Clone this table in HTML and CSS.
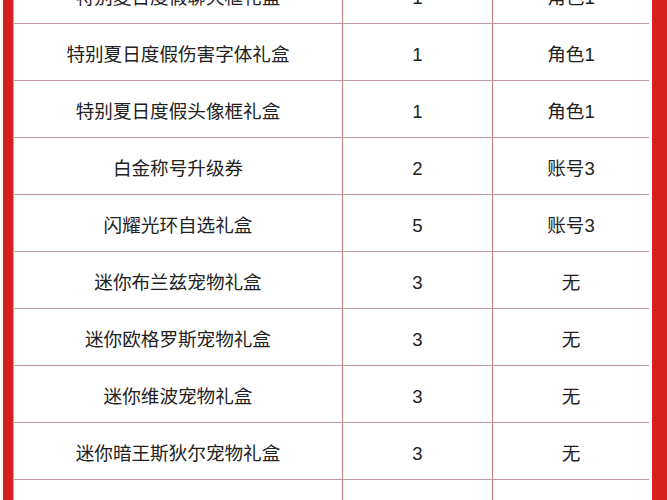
FILE: index.html
```html
<!DOCTYPE html>
<html lang="zh">
<head>
<meta charset="utf-8">
<link rel="stylesheet" href="styles.css">
</head>
<body>
<div class="page">
  <div class="bar bar-left"></div>
  <div class="table">
    <div class="row"><div class="cell">特别夏日度假聊天框礼盒</div><div class="cell num">1</div><div class="cell">角色1</div></div>
    <div class="row"><div class="cell">特别夏日度假伤害字体礼盒</div><div class="cell num">1</div><div class="cell">角色1</div></div>
    <div class="row"><div class="cell">特别夏日度假头像框礼盒</div><div class="cell num">1</div><div class="cell">角色1</div></div>
    <div class="row"><div class="cell">白金称号升级券</div><div class="cell num">2</div><div class="cell">账号3</div></div>
    <div class="row"><div class="cell">闪耀光环自选礼盒</div><div class="cell num">5</div><div class="cell">账号3</div></div>
    <div class="row"><div class="cell">迷你布兰兹宠物礼盒</div><div class="cell num">3</div><div class="cell">无</div></div>
    <div class="row"><div class="cell">迷你欧格罗斯宠物礼盒</div><div class="cell num">3</div><div class="cell">无</div></div>
    <div class="row"><div class="cell">迷你维波宠物礼盒</div><div class="cell num">3</div><div class="cell">无</div></div>
    <div class="row"><div class="cell">迷你暗王斯狄尔宠物礼盒</div><div class="cell num">3</div><div class="cell">无</div></div>
    <div class="row"><div class="cell">随机高级装扮礼盒</div><div class="cell num">10</div><div class="cell">账号1</div></div>
  </div>
  <div class="gap"></div>
  <div class="bar bar-right"></div>
</div>
</body>
</html>
```
FILE: styles.css
```css
html, body {
  margin: 0;
  padding: 0;
  background: #fff;
}
.page {
  width: 667px;
  height: 500px;
  overflow: hidden;
  display: flex;
  padding-left: 3px;
  box-sizing: border-box;
  background: #fdf7f7;
}
.bar {
  background: #d5201f;
  flex: none;
}
.bar-left {
  width: 10px;
  border-right: 1px solid #e89a9a;
}
.bar-right {
  width: 15px;
}
.gap {
  width: 3px;
  background: #fff;
  flex: none;
}
.table {
  width: 635px;
  flex: none;
  background: #fff;
  margin-top: -33px;
  display: flex;
  flex-direction: column;
}
.row {
  display: grid;
  grid-template-columns: 328px 150px 157px;
  height: 57px;
  box-sizing: border-box;
  border-bottom: 1px solid #c09a9a;
  flex: none;
}
.cell {
  display: flex;
  align-items: center;
  justify-content: center;
  font-family: "Liberation Sans", "Noto Sans CJK SC", sans-serif;
  font-size: 18.6px;
  color: #222;
  padding-top: 1px;
}
.cell.num {
  padding-top: 5px;
}
.cell + .cell {
  border-left: 1px solid #c87a7a;
}
```
